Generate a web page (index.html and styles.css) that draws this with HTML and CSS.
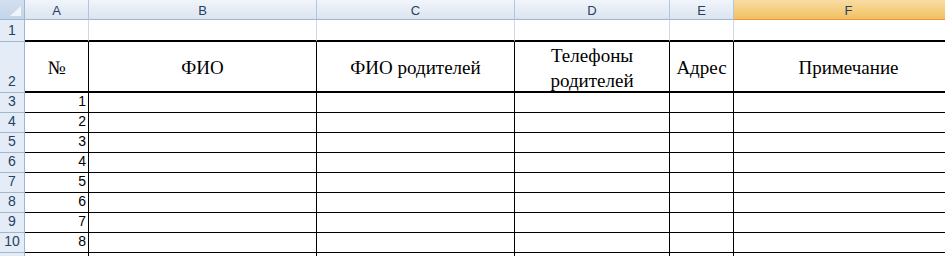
FILE: index.html
```html
<!DOCTYPE html>
<html lang="ru">
<head>
    <meta charset="UTF-8">
    <meta name="viewport" content="width=device-width, initial-scale=1.0">
    <title>Список класса</title>
    <link rel="stylesheet" href="styles.css">
</head>
<body>
    <div class="sheet">
        <!-- заголовки столбцов -->
        <div class="corner">
            <svg width="24" height="19" viewBox="0 0 24 19">
                <polygon points="21,6 21,16 10,16" fill="#f1f5fa"/>
            </svg>
        </div>
        <div class="ch">A</div>
        <div class="ch">B</div>
        <div class="ch">C</div>
        <div class="ch">D</div>
        <div class="ch">E</div>
        <div class="ch sel">F</div>

        <!-- строка 1 -->
        <div class="rh">1</div>
        <div class="cell"></div>
        <div class="cell"></div>
        <div class="cell"></div>
        <div class="cell"></div>
        <div class="cell"></div>
        <div class="cell"></div>

        <!-- шапка таблицы -->
        <div class="rh">2</div>
        <div class="tc head">№</div>
        <div class="tc head">ФИО</div>
        <div class="tc head">ФИО родителей</div>
        <div class="tc head wrap">Телефоны<br>родителей</div>
        <div class="tc head">Адрес</div>
        <div class="tc head">Примечание</div>

        <div class="rh">3</div>
        <div class="tc num">1</div><div class="tc"></div><div class="tc"></div><div class="tc"></div><div class="tc"></div><div class="tc"></div>
        <div class="rh">4</div>
        <div class="tc num">2</div><div class="tc"></div><div class="tc"></div><div class="tc"></div><div class="tc"></div><div class="tc"></div>
        <div class="rh">5</div>
        <div class="tc num">3</div><div class="tc"></div><div class="tc"></div><div class="tc"></div><div class="tc"></div><div class="tc"></div>
        <div class="rh">6</div>
        <div class="tc num">4</div><div class="tc"></div><div class="tc"></div><div class="tc"></div><div class="tc"></div><div class="tc"></div>
        <div class="rh">7</div>
        <div class="tc num">5</div><div class="tc"></div><div class="tc"></div><div class="tc"></div><div class="tc"></div><div class="tc"></div>
        <div class="rh">8</div>
        <div class="tc num">6</div><div class="tc"></div><div class="tc"></div><div class="tc"></div><div class="tc"></div><div class="tc"></div>
        <div class="rh">9</div>
        <div class="tc num">7</div><div class="tc"></div><div class="tc"></div><div class="tc"></div><div class="tc"></div><div class="tc"></div>
        <div class="rh">10</div>
        <div class="tc num">8</div><div class="tc"></div><div class="tc"></div><div class="tc"></div><div class="tc"></div><div class="tc"></div>
        <!-- следующая строка уходит за нижний край окна -->
        <div class="rh"></div>
        <div class="tc"></div><div class="tc"></div><div class="tc"></div><div class="tc"></div><div class="tc"></div><div class="tc"></div>
    </div>
</body>
</html>
```

FILE: styles.css
```css
body {
    margin: 0;
    background: #fff;
    overflow: hidden;
}

.sheet {
    display: grid;
    grid-template-columns: 25px 64px 228px 198px 155px 64px 230px;
    grid-template-rows: 20px 22px 51px repeat(9, 20px);
    width: 964px;
    height: 256px;
    overflow: hidden;
}

.sheet > div {
    box-sizing: border-box;
    min-width: 0;
}

/* угол и заголовки столбцов */
.corner {
    background: linear-gradient(#d3dff0, #c4d4ea);
    border-right: 1px solid #9eb6ce;
    border-bottom: 1px solid #9eb6ce;
}

.corner svg {
    display: block;
}

.ch {
    background: linear-gradient(#f1f5fb, #dbe4f0);
    border-right: 1px solid #b2c5dc;
    border-bottom: 1px solid #9eb6ce;
    font-family: "Liberation Sans", Arial, sans-serif;
    font-size: 13px;
    color: #27415f;
    display: flex;
    align-items: center;
    justify-content: center;
    padding-top: 1px;
}

.ch.sel {
    background: linear-gradient(#f9dca5, #f1c15f);
    border-bottom: 1px solid #f29536;
    border-right-color: #f2a33d;
}

/* заголовки строк */
.rh {
    background: #e4ecf7;
    border-right: 1px solid #9eb6ce;
    border-bottom: 1px solid #9eb6ce;
    font-family: "Liberation Sans", Arial, sans-serif;
    font-size: 14px;
    color: #27415f;
    display: flex;
    align-items: flex-end;
    justify-content: center;
    padding-bottom: 3px;
}

/* пустая строка над таблицей */
.cell {
    border-right: 1px solid #d0d7e5;
    border-bottom: 2px solid #000;
}

/* ячейки таблицы */
.tc {
    border-right: 1px solid #000;
    border-bottom: 1px solid #000;
}

.head {
    border-bottom-width: 2px;
    display: flex;
    align-items: center;
    justify-content: center;
    text-align: center;
    padding-top: 3px;
    font-family: "Liberation Serif", "Times New Roman", serif;
    font-size: 19px;
    line-height: 22px;
    color: #000;
}

.head.wrap {
    line-height: 25px;
}

.num {
    display: flex;
    align-items: flex-end;
    justify-content: flex-end;
    padding: 0 2px 3px 0;
    font-family: "Liberation Sans", Arial, sans-serif;
    font-size: 14px;
    color: #000;
}
```
